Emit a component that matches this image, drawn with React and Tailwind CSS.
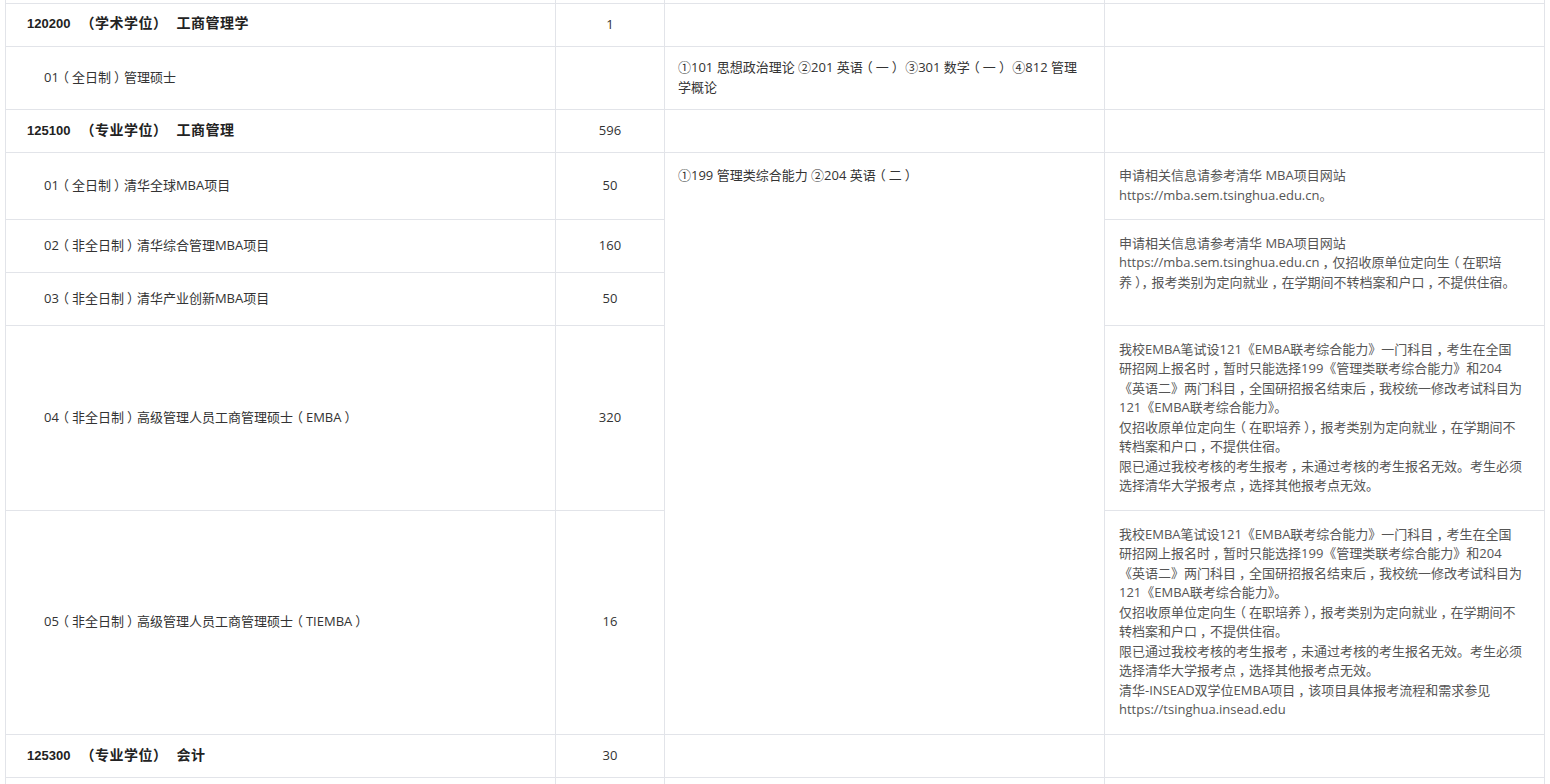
import React from 'react'

const body = { fontFamily: '"Open Sans", "Noto Sans CJK SC", sans-serif' }
const head = { fontFamily: '"Liberation Sans", "Noto Sans CJK SC", sans-serif' }

const emba = [
  '我校EMBA笔试设121《EMBA联考综合能力》一门科目，考生在全国',
  '研招网上报名时，暂时只能选择199《管理类联考综合能力》和204',
  '《英语二》两门科目，全国研招报名结束后，我校统一修改考试科目为',
  '121《EMBA联考综合能力》。',
  '仅招收原单位定向生（在职培养），报考类别为定向就业，在学期间不',
  '转档案和户口，不提供住宿。',
  '限已通过我校考核的考生报考，未通过考核的考生报名无效。考生必须',
  '选择清华大学报考点，选择其他报考点无效。',
]

// full-width punctuation sits centred in the reference font
function T({ children }) {
  return String(children)
    .split(/([（），])/)
    .map((s, i) => {
      if (s === '（') return <span key={i} className="relative -left-[3px]">{s}</span>
      if (s === '）') return <span key={i} className="relative left-[3px]">{s}</span>
      if (s === '，') return <span key={i} className="relative left-[3px]">{s}</span>
      return s
    })
}

function Lines({ lines }) {
  return lines.map((l, i) => (
    <div key={i} className="whitespace-nowrap">
      <T>{l}</T>
    </div>
  ))
}

function Head({ code, kind, name }) {
  return (
    <span className="font-bold text-[#222]" style={head}>
      <span className="text-[13px]">{code}</span>
      <span className="ml-[10px] text-[14px] tracking-[0.5px]">（{kind}）</span>
      <span className="ml-[9px] text-[14px] tracking-[0.5px]">{name}</span>
    </span>
  )
}

const cell = 'border border-[#e2e4e9] align-middle'

export default function App() {
  return (
    <div className="min-h-screen bg-white pl-[5px] text-[13px] leading-[19.5px] text-[#333]" style={body}>
      <table className="table-fixed border-collapse w-[1539px]">
        <colgroup>
          <col className="w-[550px]" />
          <col className="w-[109px]" />
          <col className="w-[440px]" />
          <col className="w-[440px]" />
        </colgroup>
        <tbody>
          <tr>
            <td className={`${cell} border-t-0 h-[3px] p-0`} />
            <td className={`${cell} border-t-0 h-[3px] p-0`} />
            <td className={`${cell} border-t-0 h-[3px] p-0`} />
            <td className={`${cell} border-t-0 h-[3px] p-0`} />
          </tr>
          <tr>
            <td className={`${cell} h-[43px] pl-[21px] pb-[2px]`}>
              <Head code="120200" kind="学术学位" name="工商管理学" />
            </td>
            <td className={`${cell} text-center`}>1</td>
            <td className={cell} />
            <td className={cell} />
          </tr>
          <tr>
            <td className={`${cell} h-[63px] pl-[38px]`}>
              <T>01（全日制）管理硕士</T>
            </td>
            <td className={cell} />
            <td className={`${cell} px-[13px]`}>
              <Lines lines={['①101 思想政治理论 ②201 英语（一） ③301 数学（一） ④812 管理', '学概论']} />
            </td>
            <td className={cell} />
          </tr>
          <tr>
            <td className={`${cell} h-[43px] pl-[21px]`}>
              <Head code="125100" kind="专业学位" name="工商管理" />
            </td>
            <td className={`${cell} text-center`}>596</td>
            <td className={cell} />
            <td className={cell} />
          </tr>
          <tr>
            <td className={`${cell} h-[67px] pl-[38px]`}>
              <T>01（全日制）清华全球MBA项目</T>
            </td>
            <td className={`${cell} text-center`}>50</td>
            <td rowSpan={5} className={`${cell} !align-top px-[13px] pt-[13px]`}>
              <T>①199 管理类综合能力 ②204 英语（二）</T>
            </td>
            <td className={`${cell} px-[14px] text-[#555]`}>
              <Lines lines={['申请相关信息请参考清华 MBA项目网站', 'https://mba.sem.tsinghua.edu.cn。']} />
            </td>
          </tr>
          <tr>
            <td className={`${cell} h-[53px] pl-[38px]`}>
              <T>02（非全日制）清华综合管理MBA项目</T>
            </td>
            <td className={`${cell} text-center`}>160</td>
            <td rowSpan={2} className={`${cell} !align-top px-[14px] pt-[14px] text-[#555]`}>
              <Lines
                lines={[
                  '申请相关信息请参考清华 MBA项目网站',
                  'https://mba.sem.tsinghua.edu.cn，仅招收原单位定向生（在职培',
                  '养），报考类别为定向就业，在学期间不转档案和户口，不提供住宿。',
                ]}
              />
            </td>
          </tr>
          <tr>
            <td className={`${cell} h-[53px] pl-[38px]`}>
              <T>03（非全日制）清华产业创新MBA项目</T>
            </td>
            <td className={`${cell} text-center`}>50</td>
          </tr>
          <tr>
            <td className={`${cell} h-[185px] pl-[38px]`}>
              <T>04（非全日制）高级管理人员工商管理硕士（EMBA）</T>
            </td>
            <td className={`${cell} text-center`}>320</td>
            <td className={`${cell} px-[14px] text-[#555]`}>
              <Lines lines={emba} />
            </td>
          </tr>
          <tr>
            <td className={`${cell} h-[224px] pl-[38px]`}>
              <T>05（非全日制）高级管理人员工商管理硕士（TIEMBA）</T>
            </td>
            <td className={`${cell} text-center`}>16</td>
            <td className={`${cell} px-[14px] text-[#555]`}>
              <Lines
                lines={[...emba, '清华-INSEAD双学位EMBA项目，该项目具体报考流程和需求参见', 'https://tsinghua.insead.edu']}
              />
            </td>
          </tr>
          <tr>
            <td className={`${cell} h-[43px] pl-[21px]`}>
              <Head code="125300" kind="专业学位" name="会计" />
            </td>
            <td className={`${cell} text-center`}>30</td>
            <td className={cell} />
            <td className={cell} />
          </tr>
          <tr>
            <td className={`${cell} h-[43px]`} />
            <td className={cell} />
            <td className={cell} />
            <td className={cell} />
          </tr>
        </tbody>
      </table>
    </div>
  )
}
